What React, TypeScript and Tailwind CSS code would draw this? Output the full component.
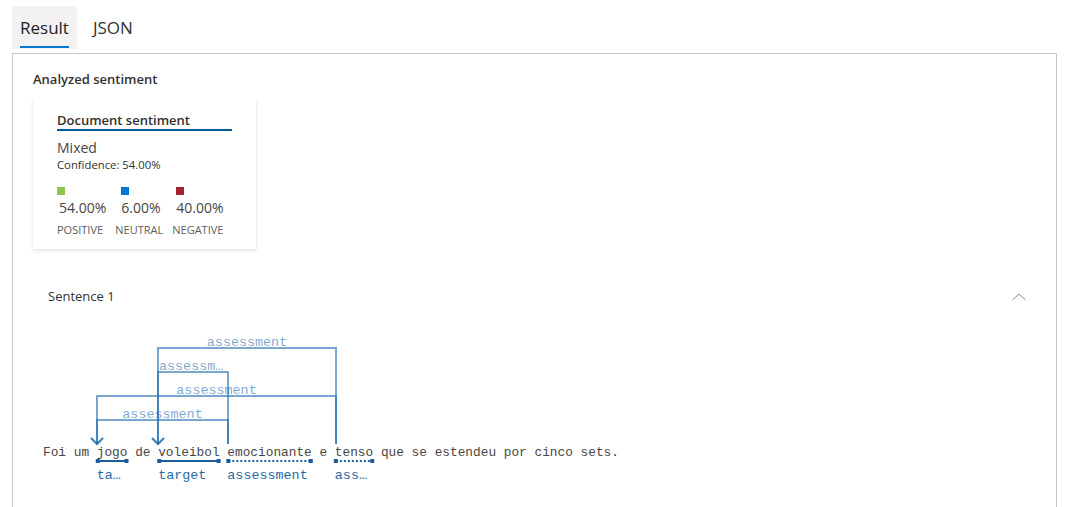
import React from 'react';

const SANS = { fontFamily: '"Open Sans", "Noto Sans", sans-serif' };
const MONO = '"Liberation Mono", "DejaVu Sans Mono", monospace';

// sentence metrics (monospace, 12.8px => 7.68px per char)
const SENTENCE = 'Foi um jogo de voleibol emocionante e tenso que se estendeu por cinco sets.';
const X0 = 43;
const CW = 7.68;
const wx = (i: number) => X0 + i * CW;

const WORDS = {
  jogo: { s: wx(7), e: wx(11), label: 'ta…', kind: 'target' },
  voleibol: { s: wx(15), e: wx(23), label: 'target', kind: 'target' },
  emocionante: { s: wx(24), e: wx(35), label: 'assessment', kind: 'assessment' },
  tenso: { s: wx(38), e: wx(43), label: 'ass…', kind: 'assessment' },
};

const ARCS = [
  { from: 228, to: 97, y: 420, label: 'assessment', anchor: 'middle' as const },
  { from: 336, to: 97, y: 396, label: 'assessment', anchor: 'middle' as const },
  { from: 228, to: 158, y: 372, label: 'assessm…', anchor: 'start' as const },
  { from: 336, to: 158, y: 348, label: 'assessment', anchor: 'middle' as const },
];

const Metric = ({ color, value, label, sq, val }: { color: string; value: string; label: string; sq: string; val: string }) => (
  <div className="flex flex-col">
    <div className={`w-[8px] h-[8px] ${sq} ${color}`} />
    <div className={`mt-[4px] text-[14px] leading-[18px] text-[#484644] ${val}`}>{value}</div>
    <div className="mt-[5px] text-[11px] leading-[16px] text-[#605e5c] uppercase">{label}</div>
  </div>
);

const ArcDiagram = () => (
  <svg width={1043} height={190} viewBox="13 317 1043 190" className="block">
    <g stroke="#1f6cb0" strokeOpacity={0.6} strokeWidth={2} fill="none">
      {ARCS.map((a, i) => (
        <g key={i}>
          <path d={`M${a.from},444 V${a.y} H${a.to} V444`} />
          <path d={`M${a.to - 6},438 L${a.to},444 L${a.to + 6},438`} />
        </g>
      ))}
    </g>
    <g fill="#1f6cb0" fillOpacity={0.6} fontFamily={MONO} fontSize={13.4}>
      {ARCS.map((a, i) => (
        <text key={i} x={a.anchor === 'middle' ? (a.from + a.to) / 2 : a.to + 1} y={a.y - 2} textAnchor={a.anchor}>
          {a.label}
        </text>
      ))}
    </g>
    <text x={X0} y={456} fontFamily={MONO} fontSize={12.8} fill="#484644">
      {SENTENCE}
    </text>
    {Object.entries(WORDS).map(([k, w]) => (
      <g key={k}>
        <line
          x1={w.s + 1}
          x2={w.e - 1}
          y1={461}
          y2={461}
          stroke="#1b5e9e"
          strokeWidth={2}
          strokeDasharray={w.kind === 'assessment' ? '2 2' : undefined}
        />
        <rect x={w.s - 1} y={459} width={4} height={4} fill="#1b5e9e" />
        <rect x={w.e - 3} y={459} width={4} height={4} fill="#1b5e9e" />
        <text x={w.s} y={479} fontFamily={MONO} fontSize={13.4} fill="#1f6aa5">
          {w.label}
        </text>
      </g>
    ))}
  </svg>
);

export default function App() {
  return (
    <div className="w-[1069px] h-[507px] overflow-hidden bg-white text-[#323130]" style={SANS}>
      {/* Tabs */}
      <div className="h-[53px] pl-[12px] pt-[6px] flex items-start">
        <div className="relative h-[43px] px-[8px] flex items-center bg-[#f3f2f1] text-[17px] text-[#201f1e]">
          Result
          <span className="absolute left-[8px] right-[8px] bottom-[1px] h-[2px] bg-[#0078d4]" />
        </div>
        <div className="ml-[8px] h-[43px] px-[8px] flex items-center text-[17px] text-[#323130]">JSON</div>
      </div>

      {/* Panel */}
      <div className="ml-[12px] w-[1045px] h-[460px] border border-b-0 border-[#c8c6c4]">
        <div className="pl-[20px] pt-[16px]">
          <div className="text-[13px] leading-[18px] font-semibold text-[#323130]">Analyzed sentiment</div>
          <div className="mt-[10px] w-[223px] h-[151px] bg-white pl-[24px] pt-[13px] shadow-[0_1.6px_3.6px_rgba(0,0,0,0.132),0_0.3px_0.9px_rgba(0,0,0,0.108)]">
            <div className="w-[175px] text-[13px] leading-[18px] font-semibold text-[#323130] border-b-2 border-[#005a9e]">
              Document sentiment
            </div>
            <div className="mt-[8px] text-[14px] leading-[18px] text-[#484644]">Mixed</div>
            <div className="text-[11.3px] leading-[16px] text-[#323130]">Confidence: 54.00%</div>
            <div className="mt-[14px] flex gap-[9px]">
              <Metric color="bg-[#92c353]" value="54.00%" label="Positive" sq="ml-0" val="ml-[2px]" />
              <Metric color="bg-[#0078d4]" value="6.00%" label="Neutral" sq="ml-[6px]" val="ml-[6px]" />
              <Metric color="bg-[#a4262c]" value="40.00%" label="Negative" sq="ml-[4px]" val="ml-[4px]" />
            </div>
          </div>
        </div>

        {/* Sentence 1 */}
        <div className="mt-[28px] h-[40px] pl-[35px] pr-[30px] flex items-center justify-between">
          <span className="text-[13px] text-[#323130]">Sentence 1</span>
          <svg width="14" height="8" viewBox="0 0 14 8" fill="none" stroke="#8a8886" strokeWidth="1">
            <path d="M0.5 7 L7 1 L13.5 7" />
          </svg>
        </div>

        <ArcDiagram />
      </div>
    </div>
  );
}
